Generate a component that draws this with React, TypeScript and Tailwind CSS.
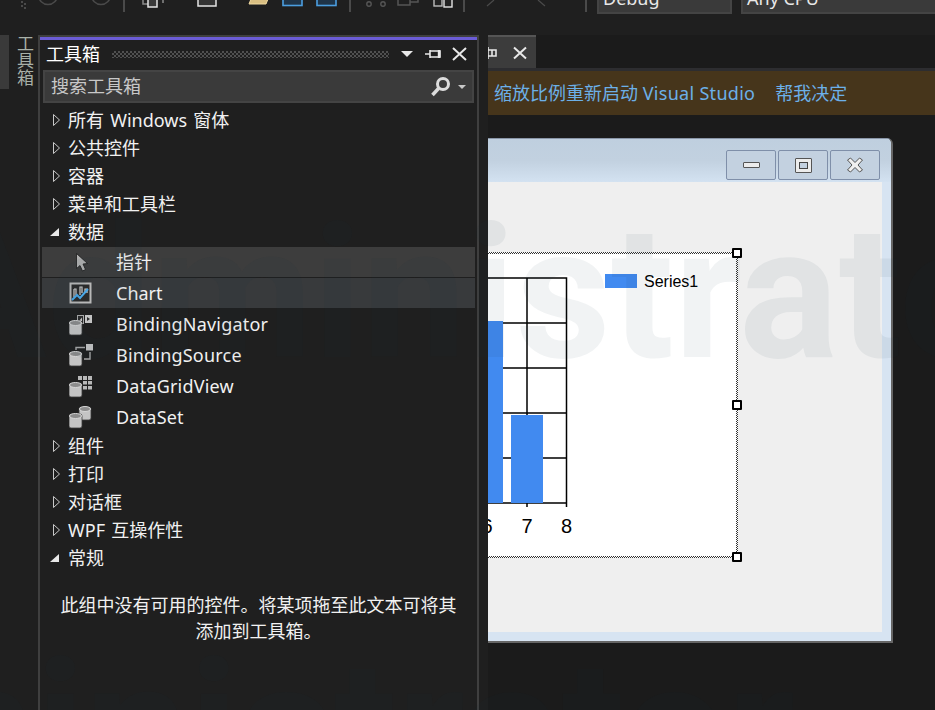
import { FC } from "react";

const Triangle: FC<{ open?: boolean }> = ({ open }) => (
  <svg width="12" height="14" viewBox="0 0 12 14" className="shrink-0">
    {open ? (
      <path d="M0 11 L9 11 L9 3 Z" fill="#e8e8e8" />
    ) : (
      <path d="M3.5 1.5 L9.5 7 L3.5 12.5 Z" fill="none" stroke="#c8c8c8" />
    )}
  </svg>
);

const Cyl: FC<{ x: number; y: number; w?: number; h?: number }> = ({ x, y, w = 13, h = 16 }) => (
  <g>
    <rect x={x} y={y + 1} width={w} height={h - 2} rx="2" fill="#c4c4c4" stroke="#3a3a3a" strokeWidth="0.8" />
    <ellipse cx={x + w / 2} cy={y + 3} rx={w / 2 - 0.5} ry="2.5" fill="#8c8c8c" stroke="#d6d6d6" strokeWidth="1" />
  </g>
);

const PointerIcon = () => (
  <svg width="24" height="24" viewBox="0 0 24 24">
    <path d="M7.5 3.5 L7.5 18.5 L11 15.5 L13.5 21 L16.5 19.5 L14 14 L18.5 13.5 Z" fill="#b0b0b0" stroke="#1a1a1a" strokeWidth="0.8" />
  </svg>
);

const ChartIcon = () => (
  <svg width="24" height="24" viewBox="0 0 24 24">
    <rect x="1.5" y="2.5" width="20" height="19" fill="#2b2b2b" stroke="#b8b8b8" strokeWidth="2" />
    <path d="M5 16 V8 M5 8 h2 v6 M11 14 V6 h2 v6 M16 12 V8 h2 v4" stroke="#cfcfcf" strokeWidth="1.2" fill="none" />
    <path d="M3 19 L8 14 L11 17 L19 8" stroke="#4aa8e8" strokeWidth="2" fill="none" />
  </svg>
);

const NavigatorIcon = () => (
  <svg width="24" height="24" viewBox="0 0 24 24">
    <rect x="8.5" y="2.5" width="6" height="8" fill="#2b2b2b" stroke="#a8a8a8" />
    <path d="M10 8 L13 4.5 V8 Z" fill="#c4c4c4" />
    <rect x="16" y="2" width="7" height="8" fill="#c4c4c4" />
    <path d="M18 4 L21 6 L18 8 Z" fill="#2b2b2b" />
    <Cyl x={0} y={7} />
  </svg>
);

const SourceIcon = () => (
  <svg width="24" height="24" viewBox="0 0 24 24">
    <path d="M7 6 V3.5 H16 M21 8 V15 H15" stroke="#a8a8a8" strokeWidth="1.4" fill="none" />
    <rect x="17" y="0" width="7" height="6.5" fill="#c4c4c4" />
    <Cyl x={0} y={7} />
  </svg>
);

const GridIcon = () => (
  <svg width="24" height="24" viewBox="0 0 24 24" fill="#b8b8b8">
    <rect x="9" y="1" width="4" height="4" />
    <rect x="14" y="1" width="4" height="4" />
    <rect x="19" y="1" width="4" height="4" />
    <rect x="14" y="6" width="4" height="3.5" />
    <rect x="19" y="6" width="4" height="3.5" />
    <rect x="14" y="11" width="4" height="3.5" />
    <rect x="19" y="11" width="4" height="3.5" />
    <Cyl x={0} y={7} />
  </svg>
);

const SetIcon = () => (
  <svg width="24" height="24" viewBox="0 0 24 24">
    <Cyl x={10} y={0} w={12} h={15} />
    <Cyl x={0} y={7} />
  </svg>
);

const Head: FC<{ label: string; open?: boolean }> = ({ label, open }) => (
  <div className="flex items-center h-[28px] pl-[8px] gap-[6px] text-[#f1f1f1]">
    <Triangle open={open} />
    <span className="[word-spacing:1.5px]">{label}</span>
  </div>
);

const Item: FC<{ label: string; icon: React.ReactNode }> = ({ label, icon }) => (
  <div className="flex items-center h-[31px] pl-[27px] gap-[23px] text-[#f1f1f1]">
    {icon}
    <span className="tracking-[0.2px]">{label}</span>
  </div>
);

const Toolbar = () => (
  <div className="flex items-start h-[35px] overflow-hidden bg-[#1f1f1f]">
    <svg width="597" height="14" viewBox="0 0 597 14" className="shrink-0">
      <g fill="#4a4a4a">
        <rect x="21" y="1" width="2" height="2" />
        <rect x="24" y="3" width="2" height="2" />
        <rect x="21" y="5" width="2" height="2" />
        <rect x="24" y="7" width="2" height="2" />
      </g>
      <circle cx="48" cy="-5" r="9.5" fill="none" stroke="#4a4a4a" strokeWidth="1.5" />
      <circle cx="101" cy="-5" r="9.5" fill="none" stroke="#4a4a4a" strokeWidth="1.5" />
      <g fill="#4a4a4a">
        <rect x="123" y="0" width="2" height="12" />
        <rect x="349" y="0" width="2" height="12" />
        <rect x="463" y="0" width="2" height="12" />
        <rect x="585" y="0" width="2" height="12" />
      </g>
      <path d="M143 0 V4 H148 M163 0 V3" stroke="#8a8a8a" strokeWidth="1.5" fill="none" />
      <rect x="148" y="-4" width="9" height="11" fill="#3a3a3a" stroke="#e4e4e4" strokeWidth="1.5" />
      <rect x="198" y="-4" width="18" height="10" fill="#333" stroke="#e4e4e4" strokeWidth="1.5" />
      <path d="M249 4 L251 -1 H268 L266 4 Z" fill="#d9bf82" stroke="#f0d9a0" />
      <rect x="283" y="-4" width="19" height="9.5" fill="#1f3448" stroke="#4b9ee0" strokeWidth="1.6" />
      <rect x="317" y="-4" width="19" height="9.5" fill="#1f3448" stroke="#4b9ee0" strokeWidth="1.6" />
      <circle cx="369" cy="4" r="2.2" fill="none" stroke="#555" strokeWidth="1.4" />
      <circle cx="383" cy="4" r="2.2" fill="none" stroke="#555" strokeWidth="1.4" />
      <path d="M398 0 V5 H410 V0 M410 2 H418 V0" fill="none" stroke="#555" strokeWidth="1.5" />
      <rect x="434" y="-4" width="8" height="10" fill="#222" stroke="#bbb" strokeWidth="1.4" />
      <rect x="444" y="-2" width="8" height="9" fill="#222" stroke="#e4e4e4" strokeWidth="1.4" />
      <path d="M487 6 L494 0 M545 6 L538 0" stroke="#4a4a4a" strokeWidth="1.2" fill="none" />
    </svg>
    <div className="w-[135px] h-[14px] overflow-hidden border-x-2 border-b-2 border-[#444] bg-[#3a3a3a] pl-[4px] text-[18px] leading-[18px] text-[#e8e8e8] shrink-0">
      <div className="mt-[-11px]">Debug</div>
    </div>
    <div className="flex-1 ml-[9px] h-[14px] overflow-hidden border-l-2 border-b-2 border-[#444] bg-[#3a3a3a] pl-[4px] text-[18px] leading-[18px] text-[#e8e8e8]">
      <div className="mt-[-11px]">Any CPU</div>
    </div>
  </div>
);

const Toolbox = () => (
  <div className="w-[441px] shrink-0 border-x-2 border-t-2 border-[#3f3f3f] bg-[#1f1f1f] flex flex-col text-[18px]">
    <div className="h-[3px] bg-[#6b5cd6]" />
    <div className="flex items-center h-[28px] pl-[6px] text-white">
      <span className="w-[66px] shrink-0 leading-[28px]">工具箱</span>
      <div className="w-[277px] h-[7px] bg-[repeating-conic-gradient(#505050_0%_25%,transparent_0%_50%)] bg-size-[4px_4px]" />
      <svg width="80" height="20" viewBox="0 0 80 20" className="shrink-0">
        <path d="M12 7 H24 L18 13 Z" fill="#e8e8e8" />
        <path d="M36 10 H41 M41 6 V14 M41 7 H51 V13 H41" stroke="#e8e8e8" strokeWidth="1.6" fill="none" />
        <path d="M50 6 V14" stroke="#e8e8e8" strokeWidth="2.4" />
        <path d="M64 4 L77 16 M77 4 L64 16" stroke="#e8e8e8" strokeWidth="2" />
      </svg>
    </div>
    <div className="flex items-center h-[33px] mx-[3px] mt-[2px] border-2 border-[#444] bg-[#3a3a3a] pl-[6px] text-[#c8c8c8]">
      <span className="flex-1">搜索工具箱</span>
      <svg width="40" height="22" viewBox="0 0 40 22" className="mr-[5px] shrink-0">
        <circle cx="16" cy="8" r="5.5" fill="none" stroke="#dcdcdc" strokeWidth="3" />
        <path d="M11.5 12.5 L5.5 19" stroke="#dcdcdc" strokeWidth="3.5" />
        <path d="M31 9 H39 L35 13 Z" fill="#c8c8c8" />
      </svg>
    </div>
    <div className="mt-[3px] px-[2px]">
      <Head label="所有 Windows 窗体" />
      <Head label="公共控件" />
      <Head label="容器" />
      <Head label="菜单和工具栏" />
      <Head label="数据" open />
      <div className="mt-[1px] flex flex-col gap-[1px]">
        <div className="flex items-center h-[30px] pl-[27px] gap-[23px] text-[#f1f1f1] bg-[#3d3d3d]">
          <PointerIcon />
          <span>指针</span>
        </div>
        <div className="flex items-center h-[30px] pl-[27px] gap-[23px] text-[#f1f1f1] bg-[#383a3c]">
          <ChartIcon />
          <span>Chart</span>
        </div>
      </div>
      <div className="mt-[1px] mb-[-1px]">
        <Item label="BindingNavigator" icon={<NavigatorIcon />} />
        <Item label="BindingSource" icon={<SourceIcon />} />
        <Item label="DataGridView" icon={<GridIcon />} />
        <Item label="DataSet" icon={<SetIcon />} />
      </div>
      <Head label="组件" />
      <Head label="打印" />
      <Head label="对话框" />
      <Head label="WPF 互操作性" />
      <Head label="常规" open />
      <p className="mt-[20px] px-[17px] text-center leading-[26px] text-[#f1f1f1]">
        此组中没有可用的控件。将某项拖至此文本可将其添加到工具箱。
      </p>
    </div>
  </div>
);

const CaptionButton: FC<{ children: React.ReactNode }> = ({ children }) => (
  <div className="flex items-center justify-center w-[50px] h-[30px] rounded-[2px] border border-[#7f8fa9] bg-[#c3d1e0]">
    {children}
  </div>
);

const Handle: FC<{ className: string }> = ({ className }) => (
  <div className={`absolute w-[10px] h-[10px] border-2 border-black bg-white rounded-[1px] ${className}`} />
);

const ChartPlot = () => (
  <svg width="248" height="302" viewBox="488 254 248 302" className="block">
    <g stroke="#000" strokeWidth="1.5" fill="none">
      <path d="M488 278 H566.5 V503" />
      <path d="M488 323 H566.5 M488 368 H566.5 M488 413 H566.5 M488 458 H566.5 M488 503 H566.5" />
      <path d="M527 278 V507 M566.5 503 V507" />
    </g>
    <rect x="488" y="321" width="15" height="182" fill="#418af0" />
    <rect x="511" y="415" width="32" height="88" fill="#418af0" />
    <g fontFamily="'Liberation Sans', sans-serif" fontSize="20" fill="#000" textAnchor="middle">
      <text x="487" y="533">6</text>
      <text x="527" y="533">7</text>
      <text x="566.5" y="533">8</text>
    </g>
    <rect x="605" y="274" width="32" height="14" fill="#418af0" />
    <text x="644" y="287" fontFamily="'Liberation Sans', sans-serif" fontSize="16" fill="#000">Series1</text>
  </svg>
);

const FormWindow = () => (
  <div className="w-[405px] h-[505px] shrink-0 flex flex-col rounded-tr-[6px] border-t border-r-2 border-b-2 border-t-[#8a96a8] border-r-[#666] border-b-[#666] bg-[#d7e4f2] overflow-hidden">
    <div className="flex justify-end items-start h-[43px] pt-[11px] pr-[11px] gap-[2px] shrink-0 bg-linear-to-b from-[#bfcfdf] via-[#c2d1e0] to-[#d3e2f1]">
      <CaptionButton>
        <div className="w-[17px] h-[6px] rounded-[1px] border border-[#555] bg-[#ececec]" />
      </CaptionButton>
      <CaptionButton>
        <div className="flex items-center justify-center w-[17px] h-[15px] rounded-[1px] border border-[#555] bg-[#ececec]">
          <div className="w-[9px] h-[7px] border border-[#444] bg-[#c3d1e0]" />
        </div>
      </CaptionButton>
      <CaptionButton>
        <svg width="18" height="16" viewBox="0 0 18 16">
          <path
            d="M1.5 3 L4.5 1 L9 5.5 L13.5 1 L16.5 3 L12 8 L16.5 13 L13.5 15 L9 10.5 L4.5 15 L1.5 13 L6 8 Z"
            fill="#f0f0f0"
            stroke="#555"
          />
        </svg>
      </CaptionButton>
    </div>
    <div className="h-[450px] w-[394px] shrink-0 bg-[#efefef] pt-[70px]">
      <div className="relative w-[250px] h-[306px] py-[2px] pr-[2px] bg-[repeating-conic-gradient(#333_0%_25%,#fff_0%_50%)] bg-size-[2px_2px]">
        <div className="bg-white">
          <ChartPlot />
        </div>
        <Handle className="right-[-4px] top-[-4px]" />
        <Handle className="right-[-4px] top-[148px]" />
        <Handle className="right-[-4px] bottom-[-4px]" />
      </div>
    </div>
  </div>
);

const Editor = () => (
  <div className="flex-1 ml-[9px] min-w-0 flex flex-col bg-[#1b1b1b] overflow-hidden text-[18px]">
    <div className="flex items-center w-[48px] h-[33px] border-t-2 border-[#555] bg-[#3c3c3c] gap-[16px]">
      <svg width="9" height="14" viewBox="0 0 9 14" className="shrink-0">
        <path d="M0 4 H8 V10 H0 M4 4 V10 M0 1 V13" stroke="#e8e8e8" strokeWidth="1.6" fill="none" />
      </svg>
      <svg width="14" height="14" viewBox="0 0 14 14" className="shrink-0">
        <path d="M1 1.5 L13 12.5 M13 1.5 L1 12.5" stroke="#e8e8e8" strokeWidth="2" />
      </svg>
    </div>
    <div className="h-[3px] bg-[#2d2d30]" />
    <div className="flex items-center h-[44px] pl-[6px] gap-[20px] bg-[#46351b] text-[#6cb0e8]">
      <span>
        缩放比例重新启动 <span className="tracking-[0.3px]">Visual Studio</span>
      </span>
      <span>帮我决定</span>
    </div>
    <div className="mt-[23px]">
      <FormWindow />
    </div>
  </div>
);

const App = () => (
  <div className="relative w-[935px] h-[710px] overflow-hidden bg-[#1f1f1f] font-['Noto_Sans','Noto_Sans_CJK_SC',sans-serif]">
    <Toolbar />
    <div className="flex h-[675px]">
      <div className="flex w-[38px] shrink-0 items-start">
        <div className="w-[9px] h-[54px] bg-[#3a3a3a]" />
        <div className="ml-[7px] h-[54px] [writing-mode:vertical-rl] text-[17px] leading-[17px] text-[#a8b0a8]">工具箱</div>
      </div>
      <Toolbox />
      <Editor />
    </div>
    <div className="absolute inset-0 pointer-events-none font-['Roboto',sans-serif] font-bold text-[186px] leading-none whitespace-nowrap text-[rgba(20,50,75,0.06)]">
      <div className="absolute left-[-78px] top-[200px]">Administrator</div>
      <div className="absolute left-[-355px] top-[635px]">Administrator</div>
    </div>
  </div>
);

export default App;
